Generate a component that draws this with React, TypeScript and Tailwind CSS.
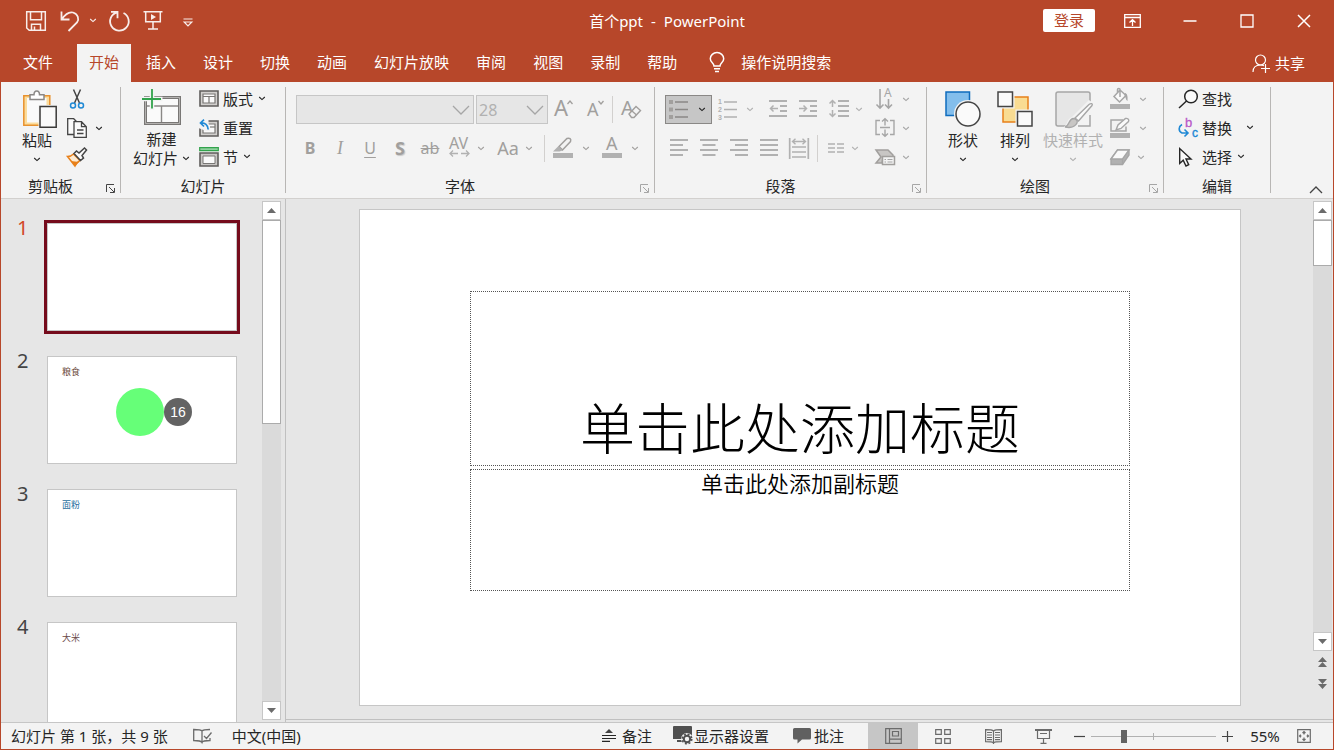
import React, { useState } from "react";
import type { ReactNode } from "react";

type SvgProps = { w: number; h: number; children: ReactNode; className?: string; sw?: number };

function Svg({ w, h, children, className = "", sw = 1 }: SvgProps) {
  return (
    <svg
      width={w}
      height={h}
      viewBox={`0 0 ${w} ${h}`}
      fill="none"
      stroke="currentColor"
      strokeWidth={sw}
      aria-hidden="true"
      className={`block shrink-0 overflow-visible ${className}`}
    >
      {children}
    </svg>
  );
}

function Chevron() {
  return (
    <Svg w={8} h={5} sw={1.1}>
      <path d="M1.200 1L4 3.600 6.800 1" />
    </Svg>
  );
}

/* ---------- Title bar icons ---------- */

const SaveIcon = () => (
  <Svg w={22} h={22} sw={1.5}>
    <path d="M1.7 1.7h18.6v18.6H4.2L1.7 18zM5.5 1.7v8h11v-8M6.5 20.3v-6h9v6M9.5 16.5v3.8" />
  </Svg>
);
const UndoIcon = () => (
  <Svg w={22} h={22} sw={1.8}>
    <path d="M2.500 1.500v8h8M2.800 9.200C6 4.500 10 1.500 14 2.500c5 1.500 6.500 6.500 4 10L9.500 21" />
  </Svg>
);
const RedoIcon = () => (
  <Svg w={22} h={22} sw={1.8}>
    <path d="M2 1.800h6.500v6.500M8.300 2.300A9.300 9.300 0 1 0 14.500 3" />
  </Svg>
);
const PresentIcon = () => (
  <Svg w={20} h={21} sw={1.5}>
    <path d="M.5 1.700h19M2.700 2v9.800h14.600V2M10 12v6.500M5 19h10" />
    <path d="M8 4v6l5-3z" fill="currentColor" stroke="none" />
  </Svg>
);
const CustomizeIcon = () => (
  <Svg w={10} h={9} sw={1.2}>
    <path d="M.5 1h9M1.200 4h7.600L5 7.800z" />
  </Svg>
);
const RibbonOptionsIcon = () => (
  <Svg w={17} h={14} sw={1.300}>
    <path d="M.700.700h15.600v12.600H.700zM.700 3.500h15.600M8.500 12V6M5.500 8.500l3-2.800 3 2.800" />
  </Svg>
);
const BulbIcon = () => (
  <Svg w={16} h={21} sw={1.500}>
    <path d="M5 14c0-3-3.700-3.500-3.700-7.200a6.700 6.200 0 0 1 13.400 0C14.700 10.500 11 11 11 14zM5 16.700h6M6 19.500h4" />
  </Svg>
);
const ShareIcon = () => (
  <Svg w={20} h={19} sw={1.200}>
    <circle cx="8.500" cy="6" r="5" />
    <path d="M1 18c0-4 2.500-7 7.500-7 1.500 0 2.500.300 3.500.800M13.500 10v9M9 14.500h9" />
  </Svg>
);

/* ---------- Clipboard and slide icons ---------- */

const PasteIcon = () => (
  <Svg w={39} h={38} sw={1.500}>
    <g transform="translate(5 0)">
      <path d="M.8 5.800h26v29.500H.8z" fill="#fbdc9c" stroke="#e8912d" />
      <path d="M4 8h19.500v24.500H4z" fill="#fafafa" stroke="none" />
      <path d="M7 9.500V4.800h4c0-5 5.500-5 5.500 0h4.500v4.700z" fill="#fff" stroke="#8a8886" />
      <path d="M15.500 15h19v24h-19z" fill="#f3f3f3" stroke="none" />
      <path d="M17 16.500h16.200v20.700H17z" fill="#fafafa" stroke="#3b3a39" />
    </g>
  </Svg>
);
const CutIcon = () => (
  <Svg w={16} h={20} sw={1.500}>
    <path d="M4.500.5l6 13.500M11.500.5l-6 13.500" stroke="#444" />
    <circle cx="4" cy="16.500" r="2.500" stroke="#2089d5" />
    <circle cx="12" cy="16.500" r="2.500" stroke="#2089d5" />
  </Svg>
);
const CopyIcon = () => (
  <Svg w={22} h={20} sw={1.300}>
    <path d="M7.500 16.500H1.700V.700h6l3 3M8 3.700h7.500l4.800 5v10.600H8zM15.500 3.700v5h4.800M11 12h6.500M11 15.500h6.500" fill="#fafafa" stroke="#444" />
  </Svg>
);
const BrushIcon = () => (
  <Svg w={22} h={20} sw={1.500}>
    <path d="M1.500 9.500c3.500 0 4.500-1 6-2.500l6.500 6.500c-2 1-4 3.500-5 5.500z" fill="#fdebd3" stroke="#e8801a" />
    <path d="M5 14l8 1-4 4z" fill="#e8801a" stroke="none" />
    <path d="M8 6.500l2.500-2.500 2.500 2L18.500 1l2 2-4.500 5.500 1.500 2.500-3 2.500z" fill="#fafafa" stroke="#444" />
  </Svg>
);
const NewSlideIcon = () => (
  <Svg w={39} h={36}>
    <path d="M3.500 8.500h34v26h-34z" fill="#fafafa" stroke="#797775" strokeWidth="3" />
    <path d="M3.500 8.500h34v26h-34z" stroke="#b4b2b0" strokeWidth="1" />
    <path d="M5 17h31M19.500 17v16" stroke="#8a8886" strokeWidth="1.400" />
    <path d="M0 10h20.500M10 0v21" stroke="#f3f3f3" strokeWidth="4.500" />
    <path d="M0 10h19M10 0v19.500" stroke="#32a34c" strokeWidth="1.800" />
  </Svg>
);
const LayoutIcon = () => (
  <Svg w={20} h={17}>
    <path d="M1 1h18v15H1z" fill="#d2d0ce" stroke="#605e5c" strokeWidth="1.600" />
    <path d="M4 4h12v9H4z" fill="#fafafa" stroke="#797775" strokeWidth="1.200" />
    <path d="M4 6.500h12M10 6.500V13" stroke="#797775" strokeWidth="1.200" />
  </Svg>
);
const ResetIcon = () => (
  <Svg w={20} h={18}>
    <path d="M1 2h18v15H1z" fill="#d2d0ce" stroke="#605e5c" strokeWidth="1.600" />
    <path d="M4 5h12v9H4z" fill="#fafafa" stroke="#797775" strokeWidth="1.200" />
    <path d="M11 8h5" stroke="#797775" strokeWidth="1.200" />
    <path d="M-.5 0H9.500v4l2 8H7L-.5 9z" fill="#f3f3f3" stroke="none" />
    <path d="M5 .7L1.500 4 5 7.500M1.500 4C6 3.500 9 6 9.200 10.500" stroke="#2089d5" strokeWidth="1.700" />
  </Svg>
);
const SectionIcon = () => (
  <Svg w={20} h={20}>
    <path d="M.7.700h18.600v3H.7z" fill="#8fd19e" stroke="#32a34c" strokeWidth="1.200" />
    <path d="M1 6h18v13H1z" fill="#c8c6c4" stroke="#605e5c" strokeWidth="1.600" />
    <path d="M4 9h12v7.500H4z" fill="#fafafa" stroke="#797775" />
  </Svg>
);

/* ---------- Font icons ---------- */

const GrowIcon = () => (
  <Svg w={22} h={22}>
    <text x="1" y="18" fontSize="22" fill="currentColor" stroke="none">A</text>
    <path d="M14.500 6l2.500-3 2.500 3" strokeWidth="1.300" />
  </Svg>
);
const ShrinkIcon = () => (
  <Svg w={22} h={22}>
    <text x="2" y="18" fontSize="18" fill="currentColor" stroke="none">A</text>
    <path d="M13.500 3l2.500 3 2.500-3" strokeWidth="1.300" />
  </Svg>
);
const ClearIcon = () => (
  <Svg w={22} h={22}>
    <text x="1" y="17" fontSize="20" fill="currentColor" stroke="none">A</text>
    <path d="M9 16l7-7.500 4.500 4-6.500 7h-2.500z" fill="#f3f3f3" strokeWidth="1.400" />
    <path d="M12 13l4.500 4" strokeWidth="1.300" />
  </Svg>
);
const SpacingIcon = () => (
  <Svg w={22} h={22}>
    <text x="0" y="12" fontSize="16" fill="currentColor" stroke="none">AV</text>
    <path d="M1 16.500h8M4 13.500l-3 3 3 3M12 16.500h8M17 13.500l3 3-3 3" strokeWidth="1.300" stroke="#b1b1b1" />
  </Svg>
);
const HighlightIcon = () => (
  <Svg w={22} h={22}>
    <path d="M7 9.500L15 1.500c2.500-1 4.500.500 3.500 3L10.500 13z" strokeWidth="1.500" />
    <path d="M6.500 9l4 4.500-3 1H1z" fill="#b1b1b1" stroke="none" />
    <path d="M1 16h20v5H1z" fill="#b1b1b1" stroke="none" />
  </Svg>
);
const FontColorIcon = () => (
  <Svg w={22} h={22}>
    <text x="5" y="13" fontSize="18" fill="currentColor" stroke="none">A</text>
    <path d="M1 16h20v5H1z" fill="#b1b1b1" stroke="none" />
  </Svg>
);

/* ---------- Paragraph icons ---------- */

const BulletsIcon = () => (
  <Svg w={20} h={20}>
    <path d="M0 0h4v4H0zM0 7.500h4v4H0zM0 15h4v4H0z" fill="#a19f9d" stroke="none" />
    <path d="M6 2h13M6 9.500h13M6 17h13" stroke="#8a8886" strokeWidth="1.500" />
  </Svg>
);
const NumberingIcon = () => (
  <Svg w={20} h={22} className="font-['Liberation_Sans',sans-serif] font-bold">
    <text x="1" y="6" fontSize="7" fill="currentColor" stroke="none">1</text>
    <text x="1" y="14" fontSize="7" fill="currentColor" stroke="none">2</text>
    <text x="1" y="22" fontSize="7" fill="currentColor" stroke="none">3</text>
    <path d="M7 4h13M7 11.500h13M7 19h13" strokeWidth="1.500" />
  </Svg>
);
const OutdentIcon = () => (
  <Svg w={18} h={18} sw={2}>
    <path d="M0 1h18M11 6h7M11 11h7M0 16h18" />
    <path d="M1.500 8.500H9M4.500 5.500l-3 3 3 3" strokeWidth="1.500" />
  </Svg>
);
const IndentIcon = () => (
  <Svg w={18} h={18} sw={2}>
    <path d="M0 1h18M11 6h7M11 11h7M0 16h18" />
    <path d="M0 8.500h7.500M4.500 5.500l3 3-3 3" strokeWidth="1.500" />
  </Svg>
);
const LineSpacingIcon = () => (
  <Svg w={20} h={18} sw={2}>
    <path d="M9 1h11M9 6h11M9 11h11M9 16h11" />
    <path d="M3.500.500V7M.500 3.500l3-3 3 3M3.500 10v6.500M.500 13.500l3 3 3-3" strokeWidth="1.500" />
  </Svg>
);
const AlignLeftIcon = () => (
  <Svg w={18} h={18} sw={2}>
    <path d="M0 1h18M0 6h13M0 11h18M0 16h13" />
  </Svg>
);
const AlignCenterIcon = () => (
  <Svg w={18} h={18} sw={2}>
    <path d="M0 1h18M2.500 6h13M0 11h18M2.500 16h13" />
  </Svg>
);
const AlignRightIcon = () => (
  <Svg w={18} h={18} sw={2}>
    <path d="M0 1h18M5 6h13M0 11h18M5 16h13" />
  </Svg>
);
const JustifyIcon = () => (
  <Svg w={18} h={18} sw={2}>
    <path d="M0 1h18M0 6h18M0 11h18M0 16h18" />
  </Svg>
);
const DistributeIcon = () => (
  <Svg w={20} h={21} sw={1.400}>
    <path d="M.7 0v21M19.300 0v21M3 9h14M3 14h14M3 19h14" strokeWidth="1.700" />
    <path d="M3.500 3.500h13M6.500.700l-3 2.800 3 2.800M13.500.700l3 2.800-3 2.800" />
  </Svg>
);
const ColumnsIcon = () => (
  <Svg w={16} h={10} sw={1.600}>
    <path d="M0 1h7M9 1h7M0 5h7M9 5h7M0 9h7M9 9h7" />
  </Svg>
);
const TextDirectionIcon = () => (
  <Svg w={20} h={22} sw={1.600}>
    <path d="M5 1v19M1.500 16.500L5 20l3.500-3.500M13.500 11v9M10 16.500l3.500 3.500 3.500-3.500" />
    <text x="9" y="9" fontSize="12" fill="currentColor" stroke="none">A</text>
  </Svg>
);
const AlignTextIcon = () => (
  <Svg w={20} h={20} sw={1.400}>
    <path d="M5 2.500H1v14h4M15 2.500h4v14h-4M5 9.500h10M10 1v6.500M7 3.500L10 .8l3 2.700M10 11.500V18M7 15.500l3 2.700 3-2.700" />
  </Svg>
);
const SmartArtIcon = () => (
  <Svg w={20} h={17}>
    <path d="M1 1h12l5 5v3H8l-1 5H1l5-6z" fill="#c8c6c4" stroke="#a19f9d" strokeWidth="1.500" />
    <path d="M7.500 7.500h12v8h-12z" fill="#f3f3f3" stroke="#a19f9d" strokeWidth="1.500" />
    <path d="M9.500 10.500h1.500M12.500 10.500h5M9.500 13h1.500M12.500 13h5" />
  </Svg>
);

/* ---------- Drawing icons ---------- */

const ShapesIcon = () => (
  <Svg w={36} h={36}>
    <path d="M1 1h23.500v23.500H1z" fill="#83beec" stroke="#0f6cbd" strokeWidth="1.500" />
    <circle cx="23" cy="23" r="14" fill="#f3f3f3" stroke="none" />
    <circle cx="23" cy="23" r="12" fill="#fafafa" stroke="#444" strokeWidth="1.500" />
  </Svg>
);
const ArrangeIcon = () => (
  <Svg w={36} h={36}>
    <path d="M6 6h25v25H6z" fill="#f9dc92" stroke="#e8801a" strokeWidth="1.500" />
    <path d="M0 0h17.500v17.500H0zM18.500 18.500H36V36H18.500z" fill="#f3f3f3" stroke="none" />
    <path d="M1 1h14.500v14.500H1zM20.500 20.500H35V35H20.500z" fill="#fafafa" stroke="#444" strokeWidth="1.500" />
  </Svg>
);
const QuickStyleIcon = () => (
  <Svg w={40} h={38}>
    <rect x="3" y="2" width="34" height="34" rx="2" fill="#e6e6e6" stroke="#a6a6a6" strokeWidth="1.500" />
    <path d="M9 38c6-2 4-9 10-11L36 10l4 3v25z" fill="#f3f3f3" stroke="none" />
    <path d="M37 25v11H25" stroke="#a6a6a6" strokeWidth="1.500" />
    <path d="M22 28L36 14.500c2-1.500 4-1 3 1L25.500 31z" fill="#fafafa" stroke="#a6a6a6" strokeWidth="1.400" />
    <path d="M12 37c4-.5 3.500-7.500 8-8.500 3 0 5 2.500 4 4.500-2 4-7 5-12 4z" fill="#c8c6c4" stroke="#a6a6a6" strokeWidth="1.400" />
  </Svg>
);
const FillIcon = () => (
  <Svg w={20} h={20}>
    <path d="M4 7.500L10 1l6 5.500L9.500 13zM10 8V.5c0-1.500-2.500-1.500-2.500 0V4" fill="#fafafa" strokeWidth="1.500" />
    <path d="M15 4c2 .5 3 2.500 2.500 8-2-1-1.500-4-3-5z" fill="currentColor" stroke="none" />
    <path d="M0 15h20v5H0z" fill="#b1b1b1" stroke="none" />
  </Svg>
);
const OutlineIcon = () => (
  <Svg w={20} h={20}>
    <path d="M16 8.500V13H1V2h12" strokeWidth="1.500" />
    <path d="M6 12l2-5L15.500.500c2-.5 4 1 3 3L11 10.500z" fill="#fafafa" strokeWidth="1.400" />
    <path d="M0 15h20v5H0z" fill="#b1b1b1" stroke="none" />
  </Svg>
);
const EffectsIcon = () => (
  <Svg w={20} h={17} sw={1.400}>
    <path d="M1 10l6.500-9h11.500v5l-6.500 9.500H1z" fill="#b1b1b1" />
    <path d="M1 10L7.500 1H19l-6.500 9z" fill="#fafafa" />
    <path d="M12.500 10v5.500" />
  </Svg>
);

/* ---------- Editing icons ---------- */

const FindIcon = () => (
  <Svg w={20} h={20} sw={1.500}>
    <circle cx="13" cy="7.500" r="6.300" fill="#fafafa" />
    <path d="M8.500 12L1 19" />
  </Svg>
);
const ReplaceIcon = () => (
  <Svg w={20} h={21} className="font-['Liberation_Sans',sans-serif]">
    <text x="7" y="10" fontSize="13" fill="#b858c8" stroke="#b858c8" strokeWidth=".3">b</text>
    <text x="14" y="20" fontSize="12" fill="#2089d5" stroke="#2089d5" strokeWidth=".4">c</text>
    <path d="M4 7.500c-3.500 2-4 6.500 0 8.500h5M6.500 12.500l3.500 3.500-3.500 3.500" stroke="#2089d5" strokeWidth="1.600" />
  </Svg>
);
const PointerIcon = () => (
  <Svg w={14} h={20} sw={1.400}>
    <path d="M1.700 1.500v15l3.500-3.300 2.800 5.800 2.700-1.300L8 12h5z" fill="#fafafa" />
  </Svg>
);

const LauncherIcon = () => (
  <Svg w={9} h={9}>
    <path d="M.5 8V.5H8M3 3l5 5M8.500 4v4.500H4" />
  </Svg>
);

/* ---------- Building blocks ---------- */

type IconButtonProps = { label: string; children: ReactNode; width?: string; disabled?: boolean };

function IconButton({ label, children, width = "w-[30px]", disabled = false }: IconButtonProps) {
  return (
    <button
      type="button"
      aria-label={label}
      disabled={disabled}
      className={`flex h-[29px] shrink-0 items-center justify-center pb-px ${width}`}
    >
      {children}
    </button>
  );
}

function MenuArrow({ label, width = "w-4", disabled = false }: { label: string; width?: string; disabled?: boolean }) {
  return (
    <IconButton label={label} width={width} disabled={disabled}>
      <Chevron />
    </IconButton>
  );
}

function LabeledRow({ icon, text, arrow = "" }: { icon: ReactNode; text: string; arrow?: string }) {
  return (
    <button type="button" className="flex h-[29px] items-center pb-0.5 text-[#262626]">
      <span className="flex w-6 items-center">{icon}</span>
      <span>{text}</span>
      {arrow && (
        <span className={arrow}>
          <Chevron />
        </span>
      )}
    </button>
  );
}

function BigButton({ icon, text, width, disabled = false }: { icon: ReactNode; text: string; width: string; disabled?: boolean }) {
  return (
    <button
      type="button"
      disabled={disabled}
      className={`flex shrink-0 flex-col items-center pt-1 ${width} ${disabled ? "text-[#b1b1b1]" : "text-[#262626]"}`}
    >
      <span className="flex h-10 items-center">{icon}</span>
      <span className="leading-[22px] whitespace-nowrap">{text}</span>
      <span className="mt-1.5">
        <Chevron />
      </span>
    </button>
  );
}

type GroupProps = { title: string; width: string; launcher?: "on" | "off"; children: ReactNode };

function Group({ title, width, launcher, children }: GroupProps) {
  return (
    <>
      <section aria-label={title} className={`flex shrink-0 flex-col pt-[3px] ${width}`}>
        <div className="flex h-[87px]">{children}</div>
        <div className="mt-1 flex h-5 items-center">
          <h2 className="flex-1 text-center leading-5">{title}</h2>
          {launcher && (
            <button
              type="button"
              aria-label={`${title}选项`}
              className={`mt-1 w-5 pl-1.5 ${launcher === "on" ? "text-[#444]" : "text-[#a6a6a6]"}`}
            >
              <LauncherIcon />
            </button>
          )}
        </div>
      </section>
      <div className="mt-[5px] h-[106px] w-px shrink-0 bg-[#b8b6b4]" />
    </>
  );
}

const tabs = ["开始", "插入", "设计", "切换", "动画", "幻灯片放映", "审阅", "视图", "录制", "帮助"];

function TitleBar() {
  return (
    <div className="grid h-[43px] grid-cols-[1fr_auto_1fr] items-center pb-1">
      <div className="flex items-center pl-6 text-white/90">
        <button type="button" aria-label="保存"><SaveIcon /></button>
        <button type="button" aria-label="撤消" className="ml-3"><UndoIcon /></button>
        <button type="button" aria-label="撤消列表" className="ml-2"><Chevron /></button>
        <button type="button" aria-label="重复" className="ml-3"><RedoIcon /></button>
        <button type="button" aria-label="从头开始放映" className="ml-3"><PresentIcon /></button>
        <button type="button" aria-label="自定义快速访问工具栏" className="ml-5 pt-1"><CustomizeIcon /></button>
      </div>
      <h1 className="flex gap-2">
        <span>首个ppt</span>
        <span>-</span>
        <span>PowerPoint</span>
      </h1>
      <div className="flex items-center justify-end pr-px">
        <button type="button" className="mr-[9px] h-[23px] w-[52px] rounded-xs bg-white leading-[23px] text-[#b7472a]">登录</button>
        <button type="button" aria-label="功能区显示选项" className="flex w-[57px] justify-center"><RibbonOptionsIcon /></button>
        <button type="button" aria-label="最小化" className="flex w-[57px] justify-center">
          <Svg w={14} h={14} sw={1.500}><path d="M.5 7h13" /></Svg>
        </button>
        <button type="button" aria-label="最大化" className="flex w-[57px] justify-center">
          <Svg w={14} h={14} sw={1.300}><path d="M1 1h12v12H1z" /></Svg>
        </button>
        <button type="button" aria-label="关闭" className="flex w-[57px] justify-center">
          <Svg w={14} h={14} sw={1.500}><path d="M1 1l12 12M13 1L1 13" /></Svg>
        </button>
      </div>
    </div>
  );
}

function TabBar() {
  const [active, setActive] = useState("开始");
  return (
    <nav className="flex h-[38px] items-stretch pr-7">
      <button type="button" className="mr-3 ml-2.5 px-3 pb-0.5">文件</button>
      <div className="flex gap-[3px]">
        {tabs.map((tab) => (
          <button
            key={tab}
            type="button"
            onClick={() => setActive(tab)}
            className={`px-3 pb-0.5 ${tab === active ? "bg-[#f3f3f3] text-[#b7472a]" : "text-white"}`}
          >
            {tab}
          </button>
        ))}
      </div>
      <button type="button" className="ml-5 flex items-center gap-4 pb-0.5">
        <BulbIcon />
        <span>操作说明搜索</span>
      </button>
      <button type="button" className="ml-auto flex items-center gap-[3px]">
        <ShareIcon />
        <span>共享</span>
      </button>
    </nav>
  );
}

function ComboBox({ label, value, width }: { label: string; value: string; width: string }) {
  return (
    <label className={`relative block h-[29px] ${width}`}>
      <span className="sr-only">{label}</span>
      <select disabled className="h-full w-full appearance-none border border-[#c6c6c6] bg-[#e6e6e6] py-0 pl-0.5 text-base leading-6 text-[#b1b1b1] opacity-100">
        <option>{value}</option>
      </select>
      <span className="pointer-events-none absolute top-2.5 right-1 text-[#a6a6a6]">
        <Svg w={18} h={11} sw={1.300}><path d="M1 1l8 8 8-8" /></Svg>
      </span>
    </label>
  );
}

function Divider() {
  return <div className="h-[27px] w-px shrink-0 bg-[#d2d0ce]" />;
}

function Ribbon() {
  return (
    <div className="flex h-[117px] shrink-0 border-b border-[#d2d0ce] bg-[#f3f3f3] text-[#262626]">
      <Group title="剪贴板" width="w-[119px]" launcher="on">
        <div className="flex pl-3">
          <BigButton icon={<PasteIcon />} text="粘贴" width="w-12" />
        </div>
        <div>
          <IconButton label="剪切" width="w-8"><CutIcon /></IconButton>
          <div className="flex">
            <IconButton label="复制" width="w-8"><CopyIcon /></IconButton>
            <MenuArrow label="复制选项" width="w-3" />
          </div>
          <IconButton label="格式刷" width="w-8"><BrushIcon /></IconButton>
        </div>
      </Group>

      <Group title="幻灯片" width="w-[164px]">
        <button type="button" className="ml-3 flex w-[57px] flex-col items-center pt-1">
          <NewSlideIcon />
          <span className="mt-[5px] leading-[19px]">新建</span>
          <span className="flex items-center gap-1 leading-[19px] whitespace-nowrap">
            幻灯片
            <Chevron />
          </span>
        </button>
        <div className="ml-[9px]">
          <LabeledRow icon={<LayoutIcon />} text="版式" arrow="ml-[5px]" />
          <LabeledRow icon={<ResetIcon />} text="重置" />
          <LabeledRow icon={<SectionIcon />} text="节" arrow="ml-[5px]" />
        </div>
      </Group>

      <Group title="字体" width="w-[368px]" launcher="off">
        <div className="flex flex-col gap-2.5 pt-2.5 pl-[9px] text-[#a19f9d]">
          <div className="flex items-center">
            <div className="flex gap-0.5 pl-px">
              <ComboBox label="字体" value="" width="w-[178px]" />
              <ComboBox label="字号" value="28" width="w-[72px]" />
            </div>
            <IconButton label="增大字号" width="w-8" disabled><GrowIcon /></IconButton>
            <IconButton label="减小字号" width="w-8" disabled><ShrinkIcon /></IconButton>
            <Divider />
            <IconButton label="清除所有格式" width="w-9" disabled><ClearIcon /></IconButton>
          </div>
          <div className="flex items-center">
            <IconButton label="加粗" disabled><b className="text-base">B</b></IconButton>
            <IconButton label="倾斜" disabled><i className="font-['Liberation_Serif',serif] text-lg">I</i></IconButton>
            <IconButton label="下划线" disabled><u className="text-base underline-offset-3">U</u></IconButton>
            <IconButton label="文字阴影" disabled><b className="text-lg text-shadow-[1px_1px_1px_#c8c8c8]">S</b></IconButton>
            <IconButton label="删除线" disabled><s className="text-base">ab</s></IconButton>
            <IconButton label="字符间距" disabled><SpacingIcon /></IconButton>
            <MenuArrow label="字符间距选项" width="w-3" disabled />
            <div className="ml-1.5 flex">
              <IconButton label="更改大小写" disabled><span className="text-lg">Aa</span></IconButton>
              <MenuArrow label="更改大小写选项" width="w-3" disabled />
            </div>
            <div className="mr-[3px] ml-[9px]"><Divider /></div>
            <IconButton label="文本突出显示颜色" disabled><HighlightIcon /></IconButton>
            <MenuArrow label="突出显示选项" disabled />
            <div className="ml-[3px] flex">
              <IconButton label="字体颜色" disabled><FontColorIcon /></IconButton>
              <MenuArrow label="字体颜色选项" disabled />
            </div>
          </div>
        </div>
      </Group>

      <Group title="段落" width="w-[271px]" launcher="off">
        <div className="flex w-[215px] flex-col gap-2.5 pt-2.5 pl-[9px] text-[#b1b1b1]">
          <div className="flex items-center">
            <button
              type="button"
              aria-label="项目符号"
              className="ml-px flex h-[29px] w-[47px] shrink-0 items-center justify-between border border-[#8a8886] bg-[#c6c6c6] pr-[5px] pl-[3px] text-[#262626]"
            >
              <BulletsIcon />
              <Chevron />
            </button>
            <IconButton label="编号" disabled><NumberingIcon /></IconButton>
            <MenuArrow label="编号选项" disabled />
            <div className="ml-[5px] flex">
              <IconButton label="降低列表级别" disabled><OutdentIcon /></IconButton>
              <IconButton label="提高列表级别" disabled><IndentIcon /></IconButton>
            </div>
            <IconButton label="行距" width="w-8" disabled><LineSpacingIcon /></IconButton>
            <MenuArrow label="行距选项" width="w-2" disabled />
          </div>
          <div className="flex items-center">
            <IconButton label="左对齐" disabled><AlignLeftIcon /></IconButton>
            <IconButton label="居中" disabled><AlignCenterIcon /></IconButton>
            <IconButton label="右对齐" disabled><AlignRightIcon /></IconButton>
            <IconButton label="两端对齐" disabled><JustifyIcon /></IconButton>
            <IconButton label="分散对齐" disabled><DistributeIcon /></IconButton>
            <div className="mx-[3px]"><Divider /></div>
            <IconButton label="分栏" disabled><ColumnsIcon /></IconButton>
            <MenuArrow label="分栏选项" width="w-2" disabled />
          </div>
        </div>
        <div className="text-[#a6a6a6]">
          <div className="flex">
            <IconButton label="文字方向" disabled><TextDirectionIcon /></IconButton>
            <MenuArrow label="文字方向选项" width="w-3" disabled />
          </div>
          <div className="flex">
            <IconButton label="对齐文本" disabled><AlignTextIcon /></IconButton>
            <MenuArrow label="对齐文本选项" width="w-3" disabled />
          </div>
          <div className="flex">
            <IconButton label="转换为 SmartArt" disabled><SmartArtIcon /></IconButton>
            <MenuArrow label="SmartArt 选项" width="w-3" disabled />
          </div>
        </div>
      </Group>

      <Group title="绘图" width="w-[236px]" launcher="off">
        <div className="flex pl-2.5">
          <BigButton icon={<ShapesIcon />} text="形状" width="w-[52px]" />
          <BigButton icon={<ArrangeIcon />} text="排列" width="w-[52px]" />
          <BigButton icon={<QuickStyleIcon />} text="快速样式" width="w-16" disabled />
        </div>
        <div className="text-[#a6a6a6]">
          <div className="flex">
            <IconButton label="形状填充" disabled><FillIcon /></IconButton>
            <MenuArrow label="形状填充选项" disabled />
          </div>
          <div className="flex">
            <IconButton label="形状轮廓" disabled><OutlineIcon /></IconButton>
            <MenuArrow label="形状轮廓选项" disabled />
          </div>
          <div className="flex">
            <IconButton label="形状效果" disabled><EffectsIcon /></IconButton>
            <MenuArrow label="形状效果选项" width="w-3" disabled />
          </div>
        </div>
      </Group>

      <Group title="编辑" width="w-[106px]">
        <div className="pl-3.5">
          <LabeledRow icon={<FindIcon />} text="查找" />
          <LabeledRow icon={<ReplaceIcon />} text="替换" arrow="ml-3.5" />
          <LabeledRow icon={<PointerIcon />} text="选择" arrow="ml-[5px]" />
        </div>
      </Group>

      <button type="button" aria-label="折叠功能区" className="mt-auto mr-2.5 mb-1 ml-auto text-[#444]">
        <Svg w={14} h={8} sw={1.300}><path d="M1 7l6-6 6 6" /></Svg>
      </button>
    </div>
  );
}

function ScrollArrow({ label, down = false }: { label: string; down?: boolean }) {
  return (
    <button
      type="button"
      aria-label={label}
      className="flex h-[19px] w-[19px] shrink-0 items-center justify-center border border-[#c6c6c6] bg-white text-[#6b6b6b]"
    >
      <Svg w={9} h={5}>
        <path d={down ? "M0 0h9L4.500 5z" : "M0 5h9L4.500 0z"} fill="currentColor" stroke="none" />
      </Svg>
    </button>
  );
}

const slides = [
  { id: 1, title: "", color: "" },
  { id: 2, title: "粮食", color: "text-[#6b4a3a]" },
  { id: 3, title: "面粉", color: "text-[#2a6f9e]" },
  { id: 4, title: "大米", color: "text-[#6b4a4a]" },
];

function ThumbnailPane() {
  const [selected, setSelected] = useState(1);
  return (
    <aside className="flex w-[285px] shrink-0 border-r border-[#c0c0c0]">
      <ol className="flex flex-1 flex-col gap-[25px] overflow-hidden pt-6 pl-4">
        {slides.map((slide) => (
          <li key={slide.id} className="flex shrink-0">
            <span className={`-mt-2 w-[30px] text-xl leading-[26px] ${slide.id === selected ? "text-[#d24726]" : "text-[#444]"}`}>
              {slide.id}
            </span>
            <button
              type="button"
              aria-label={`幻灯片 ${slide.id}`}
              onClick={() => setSelected(slide.id)}
              className={`flex h-[108px] w-[190px] flex-col border border-[#c6c6c6] bg-white pt-2 pl-3.5 text-left ${
                slide.id === selected ? "outline-3 outline-[#750b1c]" : ""
              }`}
            >
              <span className={`text-[9px] leading-[14px] ${slide.color}`}>{slide.title}</span>
              {slide.id === 2 && (
                <span className="mt-[9px] ml-[54px] flex items-center">
                  <span className="size-12 rounded-full bg-[#66ff78]" />
                  <span className="size-7 rounded-full bg-[#636363] text-center font-['Liberation_Sans',sans-serif] text-sm leading-7 text-white">
                    16
                  </span>
                </span>
              )}
            </button>
          </li>
        ))}
      </ol>
      <div className="mt-0.5 mr-1 mb-0.5 flex w-[19px] flex-col bg-[#dadada]">
        <ScrollArrow label="向上滚动" />
        <div className="h-[204px] border border-[#ababab] bg-white" />
        <div className="flex-1" />
        <ScrollArrow label="向下滚动" down />
      </div>
    </aside>
  );
}

function Editor() {
  return (
    <main className="mb-0.5 flex min-w-0 flex-1 border-b border-[#c0c0c0]">
      <article className="mt-2.5 mr-[72px] mb-[13px] ml-[73px] flex min-w-0 flex-1 flex-col items-center gap-[3px] border border-[#c6c6c6] bg-white pt-[81px] text-black">
        <div className="flex h-[175px] w-3/4 items-end justify-center border border-dotted border-[#555]">
          <h2 className="text-[55px] leading-[74px] font-light whitespace-nowrap">单击此处添加标题</h2>
        </div>
        <div className="h-[122px] w-3/4 border border-dotted border-[#555]">
          <p className="text-center text-[22px] leading-[26px] font-[350]">单击此处添加副标题</p>
        </div>
      </article>
      <div className="mt-0.5 mr-px flex w-[19px] flex-col items-center">
        <div className="flex w-full flex-1 flex-col bg-[#dadada]">
          <ScrollArrow label="向上滚动" />
          <div className="h-[46px] border border-[#ababab] bg-white" />
          <div className="flex-1" />
          <ScrollArrow label="向下滚动" down />
        </div>
        <div className="flex h-[68px] flex-col gap-3 pt-1.5 text-[#6b6b6b]">
          <button type="button" aria-label="上一张幻灯片">
            <Svg w={9} h={10}><path d="M0 5h9L4.500 0zM0 10h9L4.500 5z" fill="currentColor" stroke="none" /></Svg>
          </button>
          <button type="button" aria-label="下一张幻灯片">
            <Svg w={9} h={10}><path d="M0 0h9L4.500 5zM0 5h9l-4.500 5z" fill="currentColor" stroke="none" /></Svg>
          </button>
        </div>
      </div>
    </main>
  );
}

function StatusBar() {
  const [zoom, setZoom] = useState(25);
  return (
    <footer className="flex h-[27px] shrink-0 items-center border-t border-[#c6c6c6] bg-[#f3f3f3] text-[#262626]">
      <span className="pb-px pl-2.5 whitespace-nowrap">幻灯片 第 1 张，共 9 张</span>
      <button type="button" aria-label="拼写检查" className="ml-[25px] text-[#6b6b6b]">
        <Svg w={19} h={16} sw={1.300}>
          <path d="M9 3v11.500M9 3C8 1.500 6 1.500.700 1.500v11C5 12.500 8 12.500 9 14.500c.5-1.500 3-2 8-2V10M9 3c1-1.500 3-1.500 8-1.500M11 8l2.500 2.500 5-6" />
        </Svg>
      </button>
      <button type="button" className="ml-5 pb-px">中文(中国)</button>

      <button type="button" className="ml-auto flex items-center gap-1.5 pb-px">
        <Svg w={14} h={13} sw={1.200}>
          <path d="M3 4h8L7 0z" fill="#444" stroke="none" />
          <path d="M0 6.500h14M0 9.500h14M0 12.400h8" />
        </Svg>
        备注
      </button>
      <button type="button" className="ml-[21px] flex items-center pb-px">
        <Svg w={21} h={19}>
          <path d="M1 0h17a1 1 0 0 1 1 1v12H0V1a1 1 0 0 1 1-1zM4 14h6v2H4z" fill="#505050" stroke="none" />
          <circle cx="14" cy="13" r="6" fill="#f3f3f3" stroke="none" />
          <circle cx="14" cy="13" r="3.200" stroke="#505050" strokeWidth="2" />
          <circle cx="14" cy="13" r="4.800" stroke="#505050" strokeWidth="1.500" strokeDasharray="2 1.770" />
        </Svg>
        显示器设置
      </button>
      <button type="button" className="ml-6 flex items-center gap-0.5 pb-px">
        <Svg w={19} h={16}>
          <path d="M1.500 0h15A1.500 1.500 0 0 1 18 1.500V10a1.500 1.500 0 0 1-1.500 1.500H9L4.500 15.500v-4h-3A1.500 1.500 0 0 1 0 10V1.500A1.500 1.500 0 0 1 1.500 0z" fill="#606060" stroke="none" />
        </Svg>
        批注
      </button>

      <div className="ml-6 flex h-full text-[#6b6b6b]">
        <button type="button" aria-label="普通视图" className="flex w-[50px] items-center justify-center bg-[#c6c6c6]">
          <Svg w={17} h={16} sw={1.200}><path d="M.7.700h15.600v14.600H.7zM4.500.700v14.600M4.500 11.200h11.800M7.500 3.500h6v4.500h-6z" /></Svg>
        </button>
        <button type="button" aria-label="幻灯片浏览" className="flex w-[50px] items-center justify-center">
          <Svg w={16} h={15} sw={1.200}><path d="M.700.700h5.600v4.600H.700zM9.700.700h5.600v4.600H9.700zM.700 9.700h5.600v4.600H.700zM9.700 9.700h5.600v4.600H9.700z" /></Svg>
        </button>
        <button type="button" aria-label="阅读视图" className="flex w-[50px] items-center justify-center">
          <Svg w={17} h={15} sw={1.200}><path d="M8.500 1.500v13.500M8.500 2C7.500 1 6 .700.600.700v12C6 12.700 7.500 12.900 8.500 14c1-1.100 2.500-1.300 7.900-1.300V.700C11 .700 9.500 1 8.500 2M2 3.500h5M2 6h5M2 8.500h5M2 10.700h5M10 3.500h5M10 6h5M10 8.500h5M10 10.700h5" /></Svg>
        </button>
        <button type="button" aria-label="幻灯片放映" className="flex w-[50px] items-center justify-center">
          <Svg w={17} h={15} sw={1.200}><path d="M0 1h17" strokeWidth="2" /><path d="M2.500 1v8.500h12V1M5 4.500h7M8.500 9.500V14M5.500 14.300h6" /></Svg>
        </button>
      </div>

      <button type="button" aria-label="缩小" className="ml-1.5 text-[#444]">
        <Svg w={11} h={11} sw={1.200}><path d="M0 5.500h11" /></Svg>
      </button>
      <div className="ml-1.5 flex">
        <input
          type="range"
          aria-label="缩放"
          value={zoom}
          onChange={(event) => setZoom(Number(event.target.value))}
          className="h-[13px] w-[125px] appearance-none bg-[linear-gradient(#b1b1b1,#b1b1b1),linear-gradient(#b1b1b1,#b1b1b1)] bg-[size:100%_1px,1px_7px] bg-center bg-no-repeat [&::-webkit-slider-thumb]:h-[13px] [&::-webkit-slider-thumb]:w-1.5 [&::-webkit-slider-thumb]:appearance-none [&::-webkit-slider-thumb]:bg-[#636363]"
        />
      </div>
      <button type="button" aria-label="放大" className="ml-1.5 text-[#444]">
        <Svg w={11} h={11} sw={1.200}><path d="M0 5.500h11M5.500 0v11" /></Svg>
      </button>
      <button type="button" className="ml-4 w-8 pb-px">55%</button>
      <button type="button" aria-label="使幻灯片适应当前窗口" className="mr-[22px] ml-4 text-[#6b6b6b]">
        <Svg w={14} h={14} sw={1.200}>
          <path d="M.700.700h12.600v12.600H.700zM7 2.500v3M5.500 4L7 2.500 8.500 4M7 11.500v-3M5.500 10L7 11.500 8.500 10M2.500 7h2M3.700 5.700L2.500 7l1.200 1.300M11.500 7h-2M10.300 5.700L11.500 7l-1.200 1.300" />
        </Svg>
      </button>
    </footer>
  );
}

export default function App() {
  return (
    <div className="flex h-screen flex-col overflow-hidden border border-[#b7472a] bg-[#e6e6e6] font-['Noto_Sans','Noto_Sans_CJK_SC',sans-serif] text-[15px] leading-5">
      <header className="shrink-0 bg-[#b7472a] text-white">
        <TitleBar />
        <TabBar />
      </header>
      <Ribbon />
      <div className="flex min-h-0 flex-1">
        <ThumbnailPane />
        <Editor />
      </div>
      <StatusBar />
    </div>
  );
}
